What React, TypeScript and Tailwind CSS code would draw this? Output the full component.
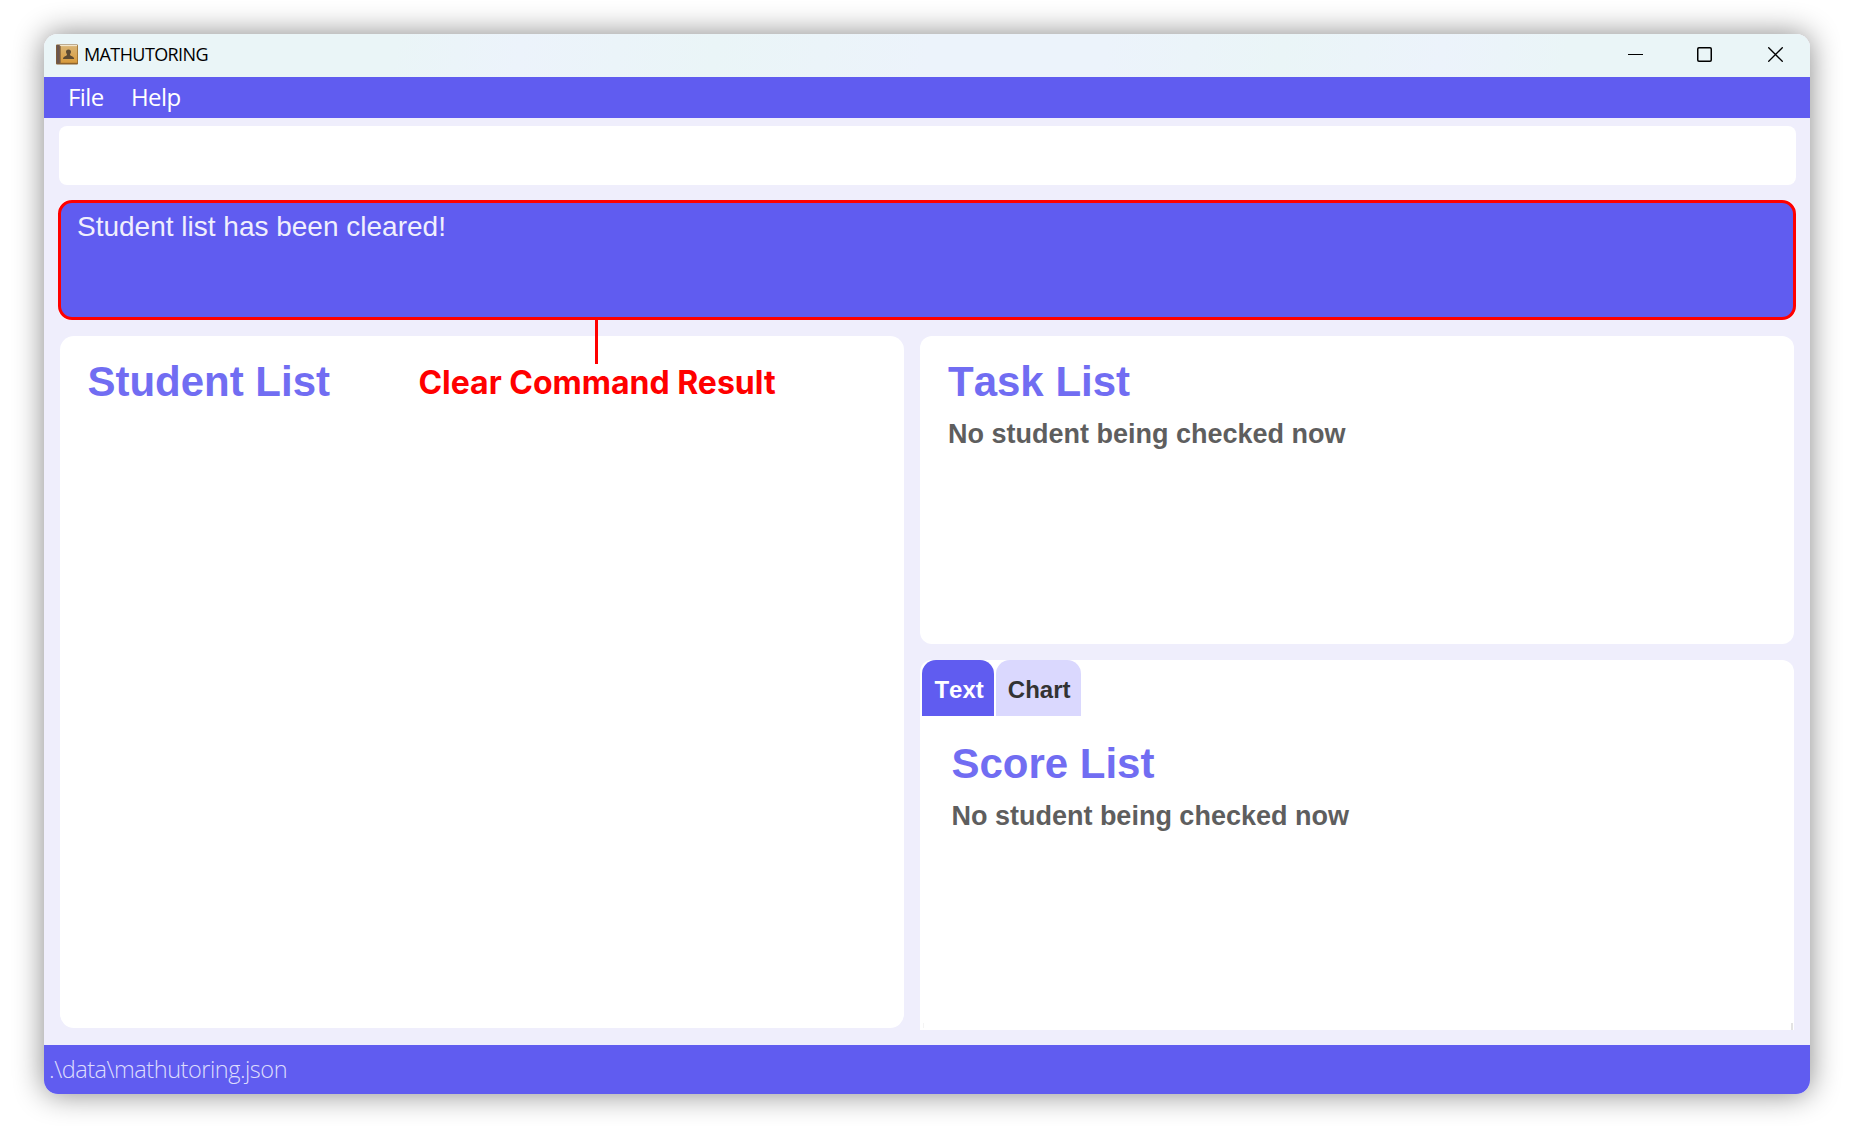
import React from "react";

function BookIcon() {
  return (
    <svg width="22" height="21" viewBox="0 0 22 21" className="mb-[3px] shrink-0">
      <defs>
        <linearGradient id="cover" x1="0" y1="0" x2="0" y2="1">
          <stop offset="0" stopColor="#d9b678" />
          <stop offset="1" stopColor="#d99b3c" />
        </linearGradient>
      </defs>
      <rect x="0" y="0.5" width="22" height="20" rx="1" fill="#8f642c" />
      <rect x="4.5" y="1" width="16.8" height="17.8" fill="url(#cover)" />
      <rect x="3" y="1" width="18" height="1.1" fill="#f4e6cc" />
      <rect x="0.6" y="1" width="3.2" height="18.6" fill="#695650" />
      <rect x="3.8" y="1.8" width="0.8" height="17.5" fill="#8c6b42" />
      <path
        d="M12.5 5.500c1.700 0 2.600 1.100 2.500 2.600-.1 1.300-.9 1.900-1 2.700 0 1.500 4 1.100 4.200 4.100H7c.2-3 4-2.600 4-4.100-.1-.8-.9-1.400-1-2.700-.1-1.500.8-2.600 2.500-2.600z"
        fill="#5d4a33"
      />
    </svg>
  );
}

function TitleBar() {
  return (
    <header className="flex h-[43px] shrink-0 items-center bg-[linear-gradient(100deg,#eaf5f7_20%,#ecf3fb_27%,#eaf5f7_38%,#ecf3fb_50%,#ecf3fb_60%,#eaf5f7_70%,#ecf3fb_79%,#eaf5f7_86%)] pl-3 text-black">
      <BookIcon />
      <h1 className="ml-[6px] pb-[3px] font-['Open_Sans',sans-serif] text-[18px] leading-6 font-normal tracking-[-0.6px] whitespace-nowrap">
        MATHUTORING
      </h1>
      <div className="ml-auto flex items-center pr-[27px] pb-[2px]">
        <svg width="15" height="15" viewBox="0 0 15 15">
          <path d="M0 7.500h15" stroke="#000" strokeWidth="1" />
        </svg>
        <svg width="15" height="15" viewBox="0 0 15 15" className="ml-[54px]">
          <rect x="0.750" y="0.750" width="13.500" height="13.500" rx="1.200" fill="none" stroke="#000" strokeWidth="1.500" />
        </svg>
        <svg width="15" height="15" viewBox="0 0 15 15" className="ml-14">
          <path d="M0.300 0.300l14.400 14.400M14.700 0.300L0.300 14.700" stroke="#000" strokeWidth="1.300" />
        </svg>
      </div>
    </header>
  );
}

function MenuBar() {
  return (
    <nav className="flex h-[41px] shrink-0 items-center bg-[#605cf0] pb-[2px] pl-6 font-['Open_Sans',sans-serif] text-[24px] leading-8 text-white">
      <span className="w-[63px] tracking-[-0.6px]">File</span>
      <span className="tracking-[-0.6px]">Help</span>
    </nav>
  );
}

function Heading({ children }: { children: React.ReactNode }) {
  return (
    <h2 className="text-[42px] leading-12 font-bold whitespace-nowrap text-[#716df2] [font-kerning:none]">
      {children}
    </h2>
  );
}

function EmptyNote() {
  return (
    <p className="mt-3 text-[27px] leading-8 font-bold whitespace-nowrap text-[#5e5e5e]">
      No student being checked now
    </p>
  );
}

function CommandResult() {
  return (
    <section className="relative -ml-px h-[120px] w-[1738px] rounded-[12px] bg-white/60">
      <div className="h-full rounded-[14px] border-3 border-[#ff0000] bg-[#605cf0] pt-2 pl-4 text-[28px] leading-8 whitespace-nowrap text-[#f0effd]">
        Student list has been cleared!
      </div>
      <div className="absolute top-full left-[360px] flex w-[357px] flex-col items-center">
        <div className="h-11 w-[3px] bg-[#ff0000]" />
        <p className="-mt-px ml-px font-['Inter',sans-serif] text-[32px] leading-10 font-bold whitespace-nowrap text-[#ff0000]">
          Clear Command Result
        </p>
      </div>
    </section>
  );
}

export default function App() {
  return (
    <main className="h-[1126px] w-[1852px] overflow-hidden bg-white pt-[34px] pl-11 font-['Liberation_Sans',Arial,sans-serif]">
      <div className="h-[1060px] w-[1766px] rounded-[14px] shadow-[0_0_30px_rgba(0,0,0,0.48)]">
        <div className="flex h-full flex-col overflow-hidden rounded-[14px] bg-[#efeefc]">
          <TitleBar />
          <MenuBar />
          <div className="flex h-[927px] shrink-0 flex-col pt-2 pl-[15px]">
            <div className="mb-[15px] h-[59px] w-[1737px] shrink-0 rounded-[8px] bg-white" />
            <CommandResult />
            <div className="mt-[16.400px] ml-[1.400px] flex gap-4">
              <section className="h-[692px] w-[844px] rounded-[14px] bg-white pt-[22px] pl-[27px]">
                <Heading>Student List</Heading>
              </section>
              <div className="flex flex-col gap-4">
                <section className="h-[308px] w-[874px] rounded-[12px] bg-white pt-[22px] pl-[27.600px]">
                  <Heading>Task List</Heading>
                  <EmptyNote />
                </section>
                <section className="flex h-[370px] w-[874px] flex-col rounded-t-[12px] bg-white">
                  <div className="flex gap-[1.500px] pl-[1.500px] text-[24px] leading-8 font-bold [font-kerning:none]">
                    <div className="flex h-[55.600px] w-[72.500px] items-center justify-center rounded-t-[14px] bg-[#605cf0] pt-1 pl-[2px] text-white">
                      Text
                    </div>
                    <div className="flex h-[55.600px] w-[85.500px] items-center justify-center rounded-t-[14px] bg-[#dad8fe] pt-1 pl-px text-[#333333]">
                      Chart
                    </div>
                  </div>
                  <div className="pt-6 pl-[31px]">
                    <Heading>Score List</Heading>
                    <EmptyNote />
                  </div>
                  <div className="mt-auto flex justify-between pr-px pl-[3px]">
                    <div className="h-[5px] w-px bg-[#f4f4f4]" />
                    <div className="h-[7px] w-[2px] bg-[#e3e3e3]" />
                  </div>
                </section>
              </div>
            </div>
          </div>
          <footer className="flex h-[49px] shrink-0 items-center bg-[#605cf0] pb-px pl-[5px] font-['Open_Sans',sans-serif] text-[23.500px] leading-8 font-light tracking-[-0.470px] whitespace-nowrap text-[#dddcfc]">
            .\data\mathutoring.json
          </footer>
        </div>
      </div>
    </main>
  );
}
